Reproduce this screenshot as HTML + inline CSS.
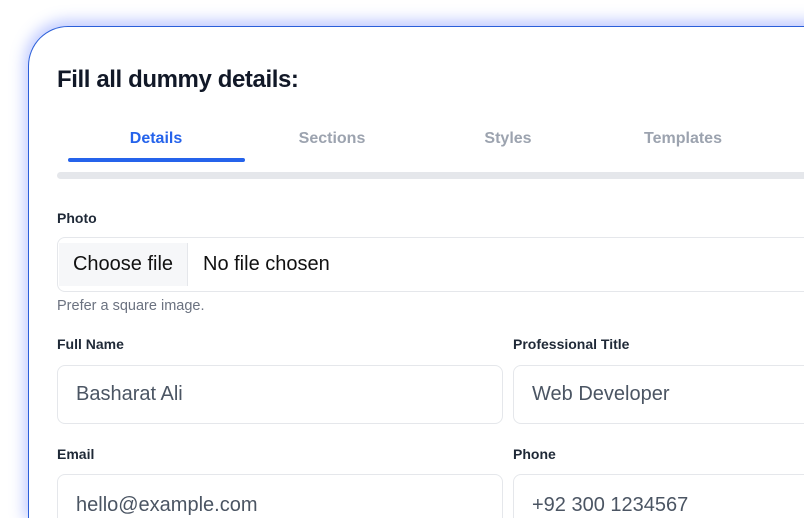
<!DOCTYPE html>
<html style="width:804px;height:518px;overflow:hidden"><head><style>
*{box-sizing:border-box;margin:0;padding:0}
body{width:804px;height:518px;overflow:hidden;background:#fff;font-family:"Liberation Sans",sans-serif;position:relative}
.card{position:absolute;left:28px;top:26px;width:900px;height:492px;border:1.5px solid #2b5fd9;border-bottom:none;border-radius:40px 0 0 0;background:#fff;box-shadow:0 -2px 14px 4px rgba(80,110,255,.35)}
h1{position:absolute;left:57px;top:66px;font-size:24px;font-weight:bold;color:#111827;letter-spacing:-0.4px}
.tab{position:absolute;top:130px;font-size:16px;font-weight:bold;color:#9ca3af;width:176px;text-align:center}
.ul{position:absolute;left:68px;top:158px;width:177px;height:4px;border-radius:2px;background:#2563eb}
.track{position:absolute;left:57px;top:172px;width:760px;height:7px;border-radius:4px;background:#e5e7eb}
.lbl{position:absolute;font-size:14px;font-weight:bold;color:#1f2937}
.inp{position:absolute;border:1px solid #e5e7eb;border-radius:8px;background:#fff;font-size:20px;color:#4b5563;padding-left:18px;display:flex;align-items:center}
</style></head><body>
<div class="card"></div>
<h1>Fill all dummy details:</h1>
<div class="tab" style="left:68px;color:#2563eb">Details</div>
<div class="tab" style="left:244px">Sections</div>
<div class="tab" style="left:420px">Styles</div>
<div class="tab" style="left:595px">Templates</div>
<div class="ul"></div>
<div class="track"></div>
<div class="lbl" style="left:57px;top:210px">Photo</div>
<div class="inp" style="left:57px;top:237px;width:780px;height:55px;padding-left:0;color:#111">
<div style="margin:5px 0 5px 1px;height:43px;width:129px;background:#f6f7f9;border-right:1px solid #e5e7eb;display:flex;align-items:center;justify-content:center">Choose file</div>
<span style="margin-left:15px">No file chosen</span></div>
<div style="position:absolute;left:57px;top:298px;font-size:14.5px;color:#6b7280">Prefer a square image.</div>
<div class="lbl" style="left:57px;top:336px">Full Name</div>
<div class="lbl" style="left:513px;top:336px">Professional Title</div>
<div class="inp" style="left:57px;top:365px;width:446px;height:59px">Basharat Ali</div>
<div class="inp" style="left:513px;top:365px;width:320px;height:59px">Web Developer</div>
<div class="lbl" style="left:57px;top:446px">Email</div>
<div class="lbl" style="left:513px;top:446px">Phone</div>
<div class="inp" style="left:57px;top:474px;width:446px;height:59px;align-items:flex-start;padding-top:19px">hello@example.com</div>
<div class="inp" style="left:513px;top:474px;width:320px;height:59px;align-items:flex-start;padding-top:19px">+92 300 1234567</div>
</body></html>
